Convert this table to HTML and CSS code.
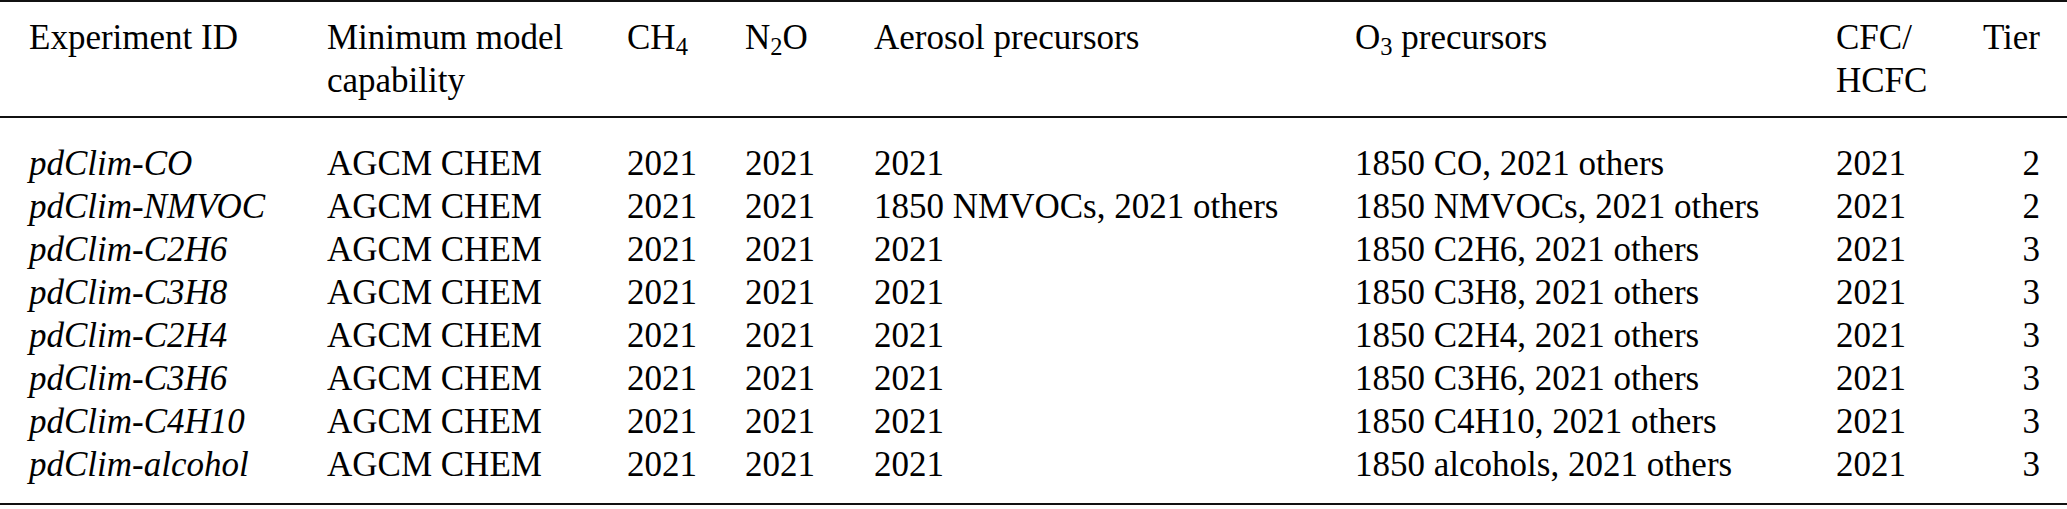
FILE: index.html
```html
<!DOCTYPE html>
<html lang="en">
<head>
    <meta charset="UTF-8">
    <title>pdClim experiments</title>
    <link rel="stylesheet" href="styles.css">
</head>
<body>
    <div class="exp-table">
        <!-- header -->
        <div class="row head">
            <div class="cell">Experiment ID</div>
            <div class="cell">Minimum model<br>capability</div>
            <div class="cell">CH<span class="sub">4</span></div>
            <div class="cell">N<span class="sub">2</span>O</div>
            <div class="cell">Aerosol precursors</div>
            <div class="cell">O<span class="sub">3</span> precursors</div>
            <div class="cell">CFC/<br>HCFC</div>
            <div class="cell num">Tier</div>
        </div>

        <div class="body">
            <div class="row">
                <div class="cell exp-id">pdClim-CO</div>
                <div class="cell">AGCM CHEM</div>
                <div class="cell">2021</div>
                <div class="cell">2021</div>
                <div class="cell">2021</div>
                <div class="cell">1850 CO, 2021 others</div>
                <div class="cell">2021</div>
                <div class="cell num">2</div>
            </div>
            <div class="row">
                <div class="cell exp-id">pdClim-NMVOC</div>
                <div class="cell">AGCM CHEM</div>
                <div class="cell">2021</div>
                <div class="cell">2021</div>
                <div class="cell">1850 NMVOCs, 2021 others</div>
                <div class="cell">1850 NMVOCs, 2021 others</div>
                <div class="cell">2021</div>
                <div class="cell num">2</div>
            </div>
            <div class="row">
                <div class="cell exp-id">pdClim-C2H6</div>
                <div class="cell">AGCM CHEM</div>
                <div class="cell">2021</div>
                <div class="cell">2021</div>
                <div class="cell">2021</div>
                <div class="cell">1850 C2H6, 2021 others</div>
                <div class="cell">2021</div>
                <div class="cell num">3</div>
            </div>
            <div class="row">
                <div class="cell exp-id">pdClim-C3H8</div>
                <div class="cell">AGCM CHEM</div>
                <div class="cell">2021</div>
                <div class="cell">2021</div>
                <div class="cell">2021</div>
                <div class="cell">1850 C3H8, 2021 others</div>
                <div class="cell">2021</div>
                <div class="cell num">3</div>
            </div>
            <div class="row">
                <div class="cell exp-id">pdClim-C2H4</div>
                <div class="cell">AGCM CHEM</div>
                <div class="cell">2021</div>
                <div class="cell">2021</div>
                <div class="cell">2021</div>
                <div class="cell">1850 C2H4, 2021 others</div>
                <div class="cell">2021</div>
                <div class="cell num">3</div>
            </div>
            <div class="row">
                <div class="cell exp-id">pdClim-C3H6</div>
                <div class="cell">AGCM CHEM</div>
                <div class="cell">2021</div>
                <div class="cell">2021</div>
                <div class="cell">2021</div>
                <div class="cell">1850 C3H6, 2021 others</div>
                <div class="cell">2021</div>
                <div class="cell num">3</div>
            </div>
            <div class="row">
                <div class="cell exp-id">pdClim-C4H10</div>
                <div class="cell">AGCM CHEM</div>
                <div class="cell">2021</div>
                <div class="cell">2021</div>
                <div class="cell">2021</div>
                <div class="cell">1850 C4H10, 2021 others</div>
                <div class="cell">2021</div>
                <div class="cell num">3</div>
            </div>
            <div class="row">
                <div class="cell exp-id">pdClim-alcohol</div>
                <div class="cell">AGCM CHEM</div>
                <div class="cell">2021</div>
                <div class="cell">2021</div>
                <div class="cell">2021</div>
                <div class="cell">1850 alcohols, 2021 others</div>
                <div class="cell">2021</div>
                <div class="cell num">3</div>
            </div>
        </div>
    </div>
</body>
</html>
```

FILE: styles.css
```css
body {
    margin: 0;
    background-color: #fff;
    color: #000;
    font-family: "Liberation Serif", "Times New Roman", serif;
}

.exp-table {
    width: 2067px;
    font-size: 35px;
    line-height: 43px;
    border-top: 2px solid #111;
    border-bottom: 2px solid #111;
}

/* column widths follow the original layout */
.row {
    display: grid;
    grid-template-columns: 298px 300px 118px 129px 481px 481px 131px 1fr;
    padding: 0 27px 0 29px;
}

.head {
    padding-top: 14px;
    padding-bottom: 14px;
    border-bottom: 2px solid #111;
}

.body {
    padding-top: 24px;
    padding-bottom: 17px;
}

.cell {
    white-space: nowrap;
}

.num {
    text-align: right;
}

.exp-id {
    font-style: italic;
}

.sub {
    font-size: 0.7em;
    line-height: 0;
    vertical-align: -0.25em;
}
```
